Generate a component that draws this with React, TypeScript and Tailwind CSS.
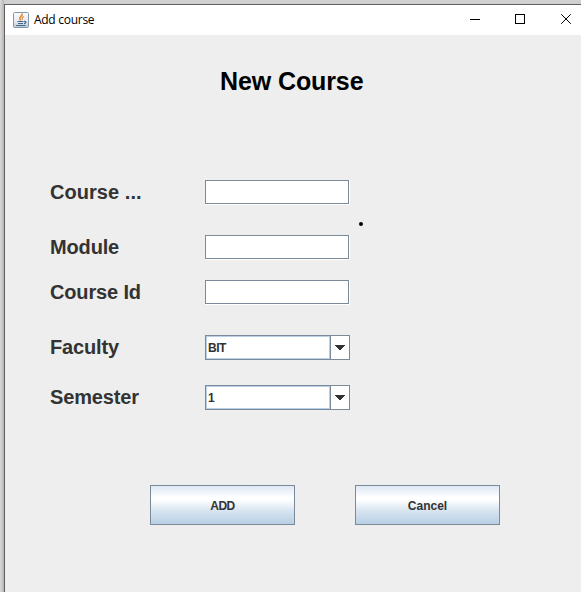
import React from "react";

function JavaIcon() {
  return (
    <svg width="16" height="16" viewBox="0 0 16 16" className="block shrink-0">
      <defs>
        <linearGradient id="tile" x1="0" y1="0" x2="0" y2="1">
          <stop offset="0" stopColor="#fbfcfd" />
          <stop offset="0.6" stopColor="#e6ebf0" />
          <stop offset="1" stopColor="#b4c3d1" />
        </linearGradient>
      </defs>
      <rect x="0.5" y="0.5" width="15" height="15" rx="1" fill="url(#tile)" stroke="#8397aa" />
      <path d="M9 1.5C10.2 3.8 6 4.6 6.9 6.8L7.8 8.4" fill="none" stroke="#e5822f" strokeWidth="1.6" />
      <path d="M11 4.4C8.8 5.2 8.8 6.2 9.4 7.8" fill="none" stroke="#e5822f" strokeWidth="1.1" />
      <path d="M4.5 9.5h6M5 11.5h5M3.2 13.5h9.3M11 9.3c2.6-.4 2.4 1.8 0 2.4" fill="none" stroke="#41698c" strokeWidth="1.2" />
    </svg>
  );
}

function TitleBar() {
  return (
    <header className="flex h-[30px] items-center bg-white pl-2">
      <JavaIcon />
      <span className="ml-[5px] flex-1 whitespace-nowrap font-['Open_Sans','Noto_Sans',sans-serif] text-[12px] leading-[30px] tracking-[-0.28px] text-black">
        Add course
      </span>
      <svg width="121" height="30" viewBox="0 0 121 30" className="block shrink-0" fill="none" stroke="#000">
        <path d="M10 14.5h10M55.5 9.5h9v9h-9z" shapeRendering="crispEdges" />
        <path d="M101.2 9.2l9.6 9.6M110.8 9.2l-9.6 9.6" strokeWidth="1" />
      </svg>
    </header>
  );
}

type RowProps = { label: string; gap: string; tracking?: string; children: React.ReactNode };

function Row({ label, gap, tracking = "tracking-[-0.15px]", children }: RowProps) {
  return (
    <div className={`flex h-[25px] ${gap}`}>
      <div className={`w-[155px] whitespace-nowrap text-[20px] font-bold leading-[25px] text-[#333] ${tracking}`}>{label}</div>
      {children}
    </div>
  );
}

function TextField() {
  return (
    <div className="h-[25px] w-[145px] border-b border-r border-white">
      <div className="h-[24px] w-[144px] border border-[#7a8a99] bg-white" />
    </div>
  );
}

function ComboBox({ value }: { value: string }) {
  return (
    <div className="flex h-[25px] w-[145px] border border-[#7a8a99] bg-white">
      <div className="w-[124px] border border-[#b8cfe5] pl-px pt-px text-[12px] font-bold leading-[21px] tracking-[-0.5px] text-[#333]">{value}</div>
      <div className="flex flex-1 justify-center border-l border-[#7a8a99] pt-[9px]">
        <svg width="10" height="5" viewBox="0 0 10 5" className="block" shapeRendering="crispEdges">
          <path d="M0 0h10v1h-1v1h-1v1h-1v1h-1v1h-2v-1h-1v-1h-1v-1h-1v-1h-1z" fill="#333" />
        </svg>
      </div>
    </div>
  );
}

function MetalButton({ children, tracking }: { children: React.ReactNode; tracking: string }) {
  return (
    <button
      className={`flex h-[40px] w-[145px] items-center justify-center border border-[#7a8a99] bg-[linear-gradient(to_bottom,#dde8f3_0%,#ffffff_30%,#ffffff_36%,#dbe7f2_62%,#b8cfe5_100%)] pt-[2px] text-[12px] font-bold leading-[14px] text-[#333] ${tracking}`}
    >
      {children}
    </button>
  );
}

export default function App() {
  return (
    <div className="h-[592px] w-[581px] overflow-hidden bg-[#d0d0d0] bg-[linear-gradient(to_right,#dadada,#b4b4b4_4px,#d0d0d0_4px)] pl-1 pt-1 font-['Liberation_Sans',Arial,sans-serif]">
      <div className="h-[588px] border-l border-t border-[#606060] bg-[#eee]">
        <TitleBar />
        <main>
          <h1 className="ml-[215px] pt-[31px] text-[25px] font-bold leading-[30px] tracking-[-0.1px] text-black">New Course</h1>
          <div className="pl-[45px]">
            <Row label="Course ..." gap="mt-[84px]" tracking="tracking-[0.05px]"><TextField /></Row>
            <div className="flex h-[30px] pl-[309px] pt-[17px]">
              <div className="h-1 w-1 rounded-full bg-black" />
            </div>
            <Row label="Module" gap="mt-0"><TextField /></Row>
            <Row label="Course Id" gap="mt-5"><TextField /></Row>
            <Row label="Faculty" gap="mt-[30px]"><ComboBox value="BIT" /></Row>
            <Row label="Semester" gap="mt-[25px]"><ComboBox value="1" /></Row>
          </div>
          <div className="mt-[75px] flex gap-[60px] pl-[145px]">
            <MetalButton tracking="tracking-[-0.5px]">ADD</MetalButton>
            <MetalButton tracking="tracking-normal">Cancel</MetalButton>
          </div>
        </main>
      </div>
    </div>
  );
}
